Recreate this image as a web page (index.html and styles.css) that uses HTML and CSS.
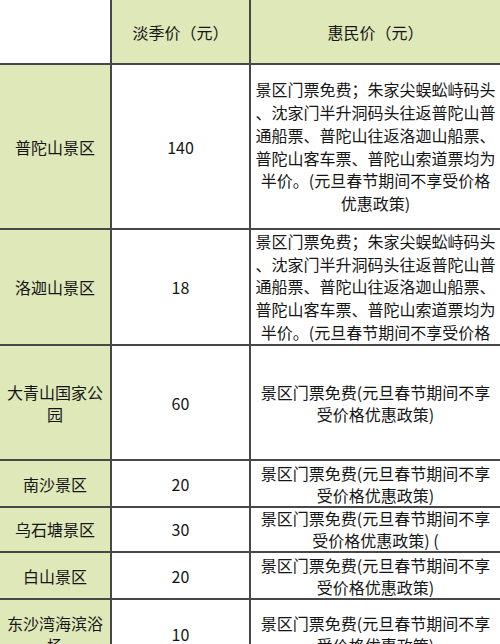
FILE: index.html
```html
<!DOCTYPE html>
<html lang="zh-CN">
<head>
<meta charset="utf-8">
<title>舟山景区票价</title>
<link rel="stylesheet" href="styles.css">
</head>
<body>
<table class="price">
  <colgroup>
    <col class="c1">
    <col class="c2">
    <col class="c3">
  </colgroup>
  <tr class="r-head">
    <td class="blank"></td>
    <td class="head">淡季价（元）</td>
    <td class="head">惠民价（元）</td>
  </tr>
  <tr class="r1">
    <td class="name">普陀山景区</td>
    <td class="num">140</td>
    <td class="desc long">景区门票免费；朱家尖蜈蚣峙码头<br>、沈家门半升洞码头往返普陀山普<br>通船票、普陀山往返洛迦山船票、<br>普陀山客车票、普陀山索道票均为<br>半价。(元旦春节期间不享受价格<br>优惠政策)</td>
  </tr>
  <tr class="r2">
    <td class="name">洛迦山景区</td>
    <td class="num">18</td>
    <td class="desc long top"><div class="clip">景区门票免费；朱家尖蜈蚣峙码头<br>、沈家门半升洞码头往返普陀山普<br>通船票、普陀山往返洛迦山船票、<br>普陀山客车票、普陀山索道票均为<br>半价。(元旦春节期间不享受价格<br>优惠政策)</div></td>
  </tr>
  <tr class="r3">
    <td class="name">大青山国家公园</td>
    <td class="num">60</td>
    <td class="desc">景区门票免费(元旦春节期间不享<br>受价格优惠政策)</td>
  </tr>
  <tr class="r4">
    <td class="name">南沙景区</td>
    <td class="num">20</td>
    <td class="desc">景区门票免费(元旦春节期间不享<br>受价格优惠政策)</td>
  </tr>
  <tr class="r5">
    <td class="name">乌石塘景区</td>
    <td class="num">30</td>
    <td class="desc">景区门票免费(元旦春节期间不享<br>受价格优惠政策) (</td>
  </tr>
  <tr class="r6">
    <td class="name">白山景区</td>
    <td class="num">20</td>
    <td class="desc">景区门票免费(元旦春节期间不享<br>受价格优惠政策)</td>
  </tr>
  <tr class="r7">
    <td class="name">东沙湾海滨浴场</td>
    <td class="num">10</td>
    <td class="desc">景区门票免费(元旦春节期间不享<br>受价格优惠政策)</td>
  </tr>
</table>
</body>
</html>
```

FILE: styles.css
```css
html, body {
  margin: 0;
  padding: 0;
  background: #ffffff;
}

body {
  width: 500px;
  height: 644px;
  overflow: hidden;
  font-family: "Noto Sans CJK SC", "Noto Sans", sans-serif;
  font-size: 16px;
  color: #161616;
}

.price {
  width: 500px;
  table-layout: fixed;
  border-collapse: collapse;
  border-style: hidden;
}

.c1 { width: 111px; }
.c2 { width: 139px; }
.c3 { width: 250px; }

.price td {
  border: 2px solid #474747;
  padding: 0 3px;
  text-align: center;
  vertical-align: middle;
  line-height: 22px;
  overflow: hidden;
}

.price .head {
  background: #dfe8b9;
}

.price .blank {
  background: #ffffff;
}

.price .name {
  background: #dfe8b9;
  padding: 0 4px;
}

.price .desc {
  white-space: nowrap;
  padding: 0 2px;
}

.price .desc.long {
  line-height: 22.7px;
}

.price .desc.top {
  vertical-align: top;
}

.clip {
  height: 112px;
  overflow: hidden;
}

.r-head td { height: 63px; }
.r1 td { height: 163px; }
.r2 td { height: 114px; }
.r3 td { height: 113px; }
.r4 td { height: 45px; }
.r5 td { height: 43px; line-height: 21.5px; }
.r6 td { height: 45px; }
.r7 td { height: 68px; }
```
